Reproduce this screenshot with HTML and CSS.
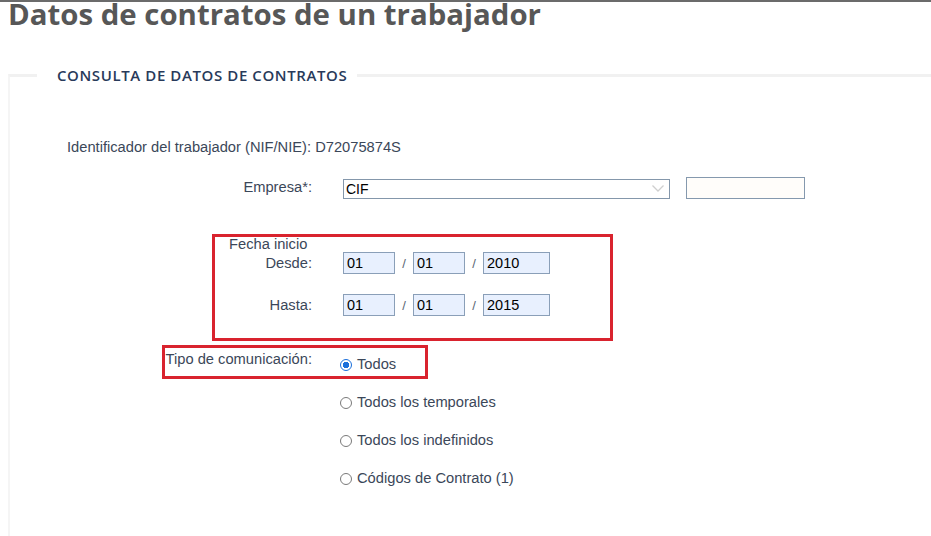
FILE: index.html
```html
<!DOCTYPE html>
<html lang="es">
<head>
<meta charset="utf-8">
<title>Datos de contratos de un trabajador</title>
<link rel="stylesheet" href="styles.css">
</head>
<body>
<div class="topbar"></div>
<h1 class="title">Datos de contratos de un trabajador</h1>
<fieldset class="panel">
  <legend class="panel-legend">CONSULTA DE DATOS DE CONTRATOS</legend>
  <p class="ident">Identificador del trabajador (NIF/NIE): D72075874S</p>
  <div class="row row-empresa">
    <label class="lbl">Empresa*:</label>
    <div class="ctrl">
      <div class="select"><span class="select-val">CIF</span>
        <svg class="chev" width="12" height="7" viewBox="0 0 12 7"><polyline points="0.5,0.5 6,6 11.5,0.5" fill="none" stroke="#cfcfcf" stroke-width="1.3"/></svg>
      </div>
      <input class="txt" type="text" value="">
    </div>
  </div>
  <div class="fecha-title">Fecha inicio</div>
  <div class="row row-date">
    <label class="lbl">Desde:</label>
    <div class="ctrl">
      <input class="dt dd" value="01"><span class="slash">/</span><input class="dt dd" value="01"><span class="slash">/</span><input class="dt yy" value="2010">
    </div>
  </div>
  <div class="row row-date row-hasta">
    <label class="lbl">Hasta:</label>
    <div class="ctrl">
      <input class="dt dd" value="01"><span class="slash">/</span><input class="dt dd" value="01"><span class="slash">/</span><input class="dt yy" value="2015">
    </div>
  </div>
  <div class="row row-tipo">
    <label class="lbl lbl-top">Tipo de comunicación:</label>
    <div class="radios">
      <div class="radio-item"><span class="radio checked"></span>Todos</div>
      <div class="radio-item"><span class="radio"></span>Todos los temporales</div>
      <div class="radio-item"><span class="radio"></span>Todos los indefinidos</div>
      <div class="radio-item"><span class="radio"></span>Códigos de Contrato (1)</div>
    </div>
  </div>
</fieldset>
<div class="mark mark-fechas"></div>
<div class="mark mark-tipo"></div>
</body>
</html>
```
FILE: styles.css
```css
html, body {
  margin: 0;
  padding: 0;
  background: #ffffff;
}
body {
  position: relative;
  width: 931px;
  height: 536px;
  overflow: hidden;
  font-family: "Liberation Sans", Arial, sans-serif;
  font-size: 14.7px;
  color: #3b4759;
}
.topbar {
  height: 2px;
  background: #6b6b6b;
}
.title {
  margin: -1px 0 0 8px;
  font-family: "Open Sans", sans-serif;
  font-weight: 700;
  font-size: 29.4px;
  line-height: 26px;
  color: #575757;
  white-space: nowrap;
}
.panel {
  margin: 40px 0 0 8px;
  padding: 0 0 60px 0;
  border: none;
  border-top: 3px solid #f1f1f1;
  border-left: 2px solid #f5f5f5;
  min-width: 0;
}
.panel-legend {
  margin-left: 27px;
  padding: 0 10px 0 20px;
  font-family: "Open Sans", sans-serif;
  font-weight: 600;
  font-size: 15px;
  line-height: 16px;
  color: #283a5a;
  letter-spacing: 0.6px;
}
.ident {
  margin: 56px 0 0 57px;
  line-height: 16px;
}
.row {
  display: flex;
  align-items: flex-start;
}
.lbl {
  width: 302px;
  text-align: right;
  flex: none;
}
.ctrl {
  display: flex;
  align-items: center;
  margin-left: 31px;
}
.row-empresa {
  margin-top: 22px;
}
.row-empresa .lbl {
  line-height: 20px;
}
.select {
  box-sizing: border-box;
  width: 327px;
  height: 20px;
  border: 1px solid #8497ab;
  background: #ffffff;
  display: flex;
  align-items: center;
  justify-content: space-between;
  padding: 0 5px 0 2px;
  color: #000;
  margin-top: 1px;
}
.select-val {
  line-height: 18px;
  font-size: 14px;
}
.chev {
  display: block;
}
.txt {
  box-sizing: border-box;
  width: 119px;
  height: 22px;
  margin: 0 0 0 16px;
  border: 1px solid #8599ae;
  background: #fffdfa;
  padding: 0 3px;
  font: 14px "Liberation Sans", Arial, sans-serif;
  outline: none;
}
.fecha-title {
  margin-top: 38px;
  padding-left: 219px;
  line-height: 15px;
}
.row-date {
  margin-top: 0;
}
.row-date .lbl {
  line-height: 22px;
}
.row-hasta {
  margin-top: 20px;
}
.dt {
  box-sizing: border-box;
  height: 22px;
  border: 1px solid #8a9fb8;
  background: #e8f0fe;
  padding: 0 3px;
  margin: 0;
  font: 14.5px "Liberation Sans", Arial, sans-serif;
  color: #000;
  outline: none;
}
.dd {
  width: 52px;
}
.yy {
  width: 67px;
}
.slash {
  display: inline-block;
  width: 18px;
  text-align: center;
  color: #5a6472;
  font-size: 13px;
}
.row-tipo {
  margin-top: 35px;
}
.lbl-top {
  line-height: 16px;
}
.radios {
  margin-left: 28px;
  display: flex;
  flex-direction: column;
  gap: 14px;
  padding-top: 1px;
}
.radio-item {
  display: flex;
  align-items: center;
  height: 24px;
  line-height: 24px;
}
.radio {
  box-sizing: border-box;
  width: 12px;
  height: 12px;
  border: 1px solid #7a7a7a;
  border-radius: 50%;
  margin-right: 5px;
  margin-top: 2px;
  background: #fff;
}
.radio.checked {
  border: 1px solid #1a6fdb;
  background: radial-gradient(circle, #1a6fdb 0 3px, #ffffff 3.5px);
}
.mark {
  position: absolute;
  border: 3px solid #d9232e;
  box-sizing: border-box;
}
.mark-fechas {
  left: 212px;
  top: 234px;
  width: 401px;
  height: 107px;
}
.mark-tipo {
  left: 162px;
  top: 345px;
  width: 266px;
  height: 34px;
}
```
